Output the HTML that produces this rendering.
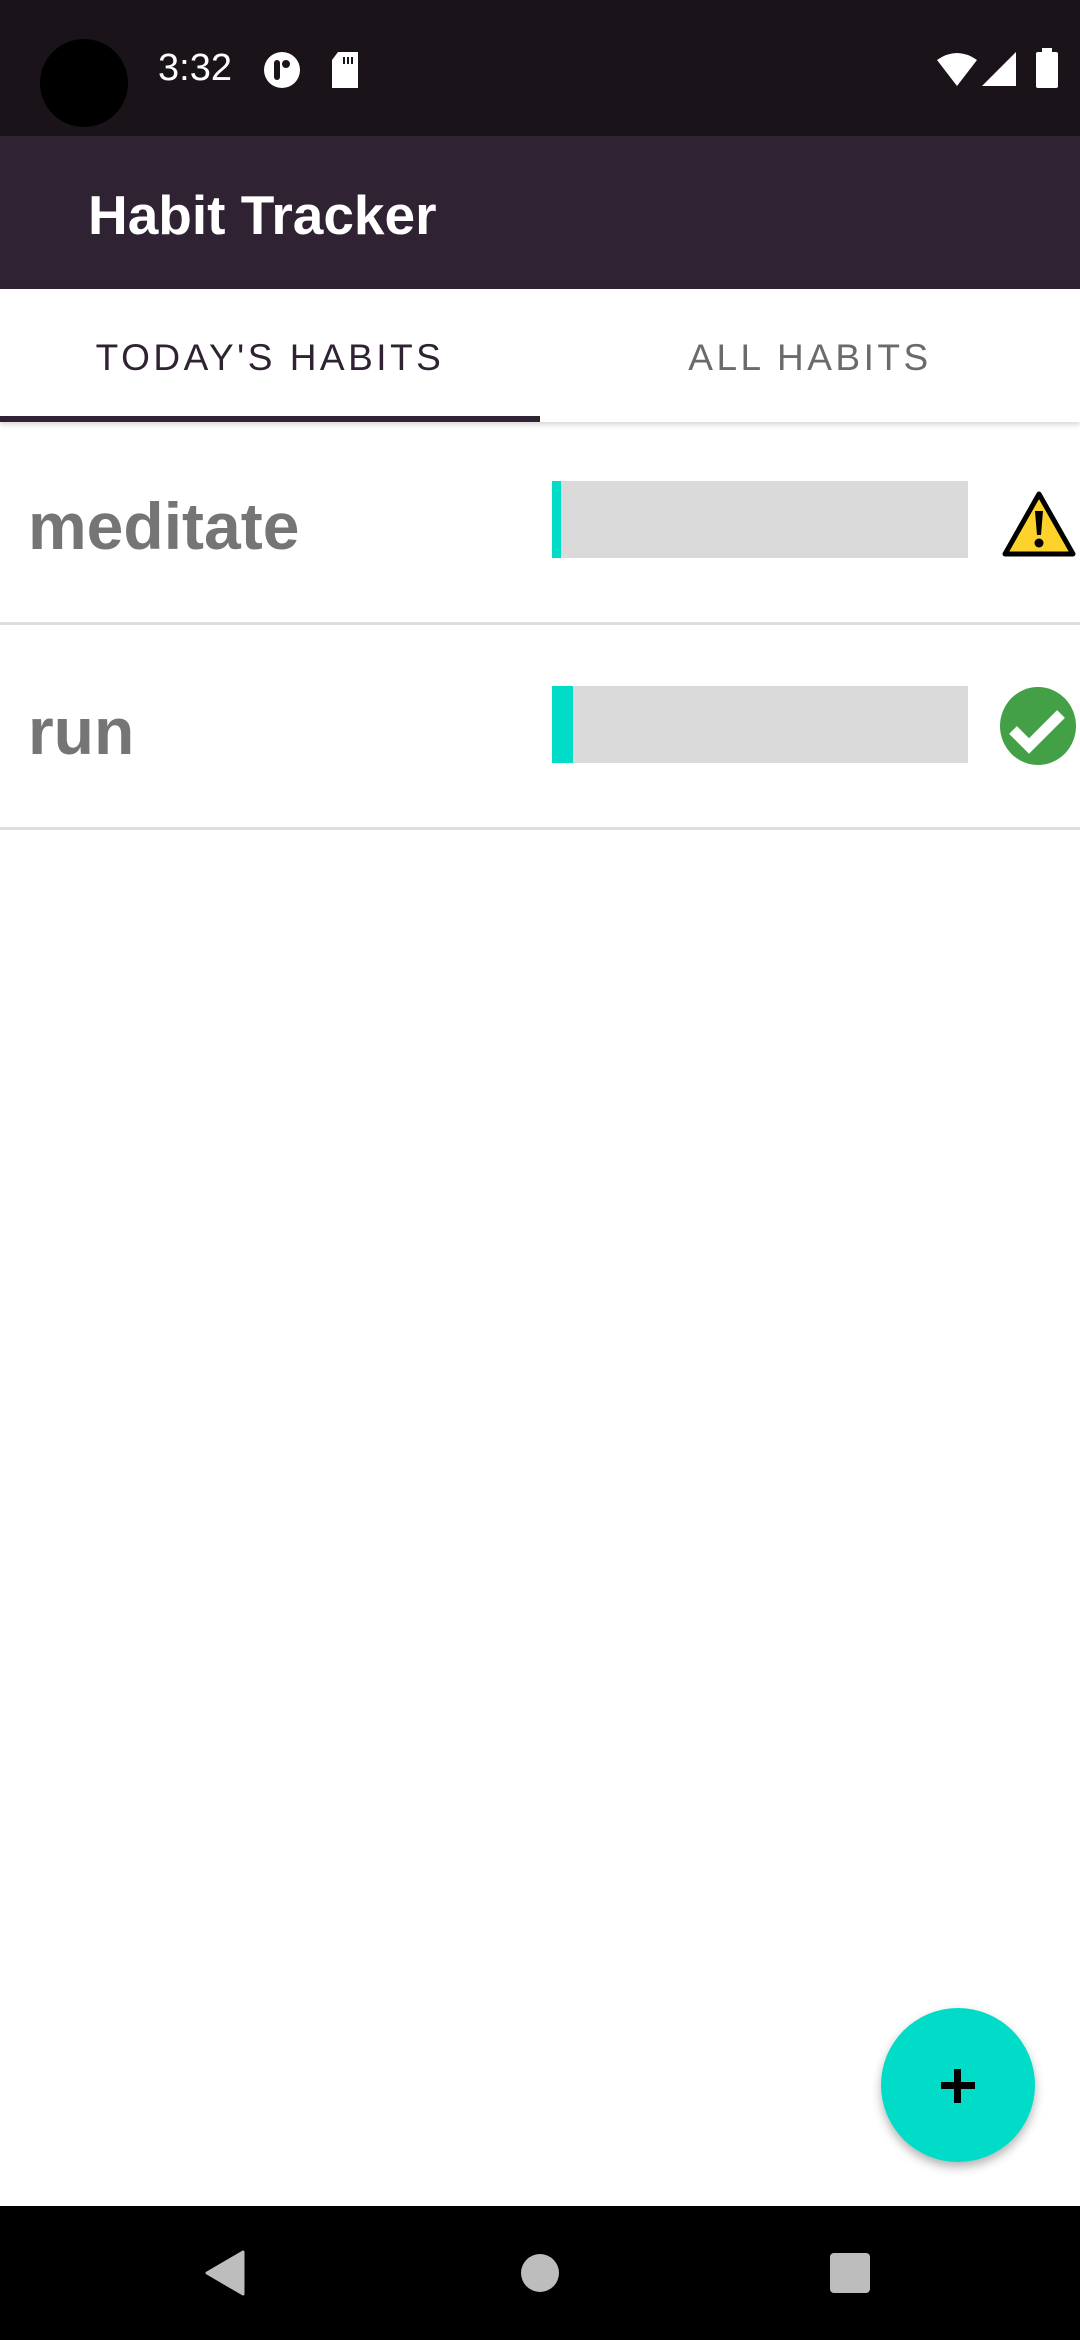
<!DOCTYPE html>
<html><head><meta charset="utf-8"><style>
*{margin:0;padding:0;box-sizing:border-box}
body{width:1080px;height:2340px;position:relative;background:#fff;font-family:"Liberation Sans",sans-serif;overflow:hidden}
.abs{position:absolute}
</style></head><body>
<div class="abs" style="left:0;top:0;width:1080px;height:136px;background:#1a1319"></div>
<div class="abs" style="left:40px;top:39px;width:88px;height:88px;border-radius:50%;background:#000"></div>
<div class="abs" style="left:158px;top:47px;color:#fff;font-size:38px;line-height:42px">3:32</div>
<svg class="abs" style="left:262px;top:50px" width="40" height="40" viewBox="0 0 40 40"><circle cx="20" cy="20" r="18" fill="#fff"/><rect x="12" y="10" width="6" height="20" rx="3" fill="#1a1319"/><circle cx="24" cy="14" r="4" fill="#1a1319"/></svg>
<svg class="abs" style="left:330px;top:52px" width="30" height="36" viewBox="0 0 30 36"><path d="M8 0H28V36H2V8Z" fill="#fff"/><rect x="13" y="5" width="2" height="7" fill="#1a1319"/><rect x="17" y="5" width="2" height="7" fill="#1a1319"/><rect x="21" y="5" width="2" height="7" fill="#1a1319"/></svg>
<svg class="abs" style="left:937px;top:52px" width="40" height="34" viewBox="0 0 40 34"><path d="M0 8Q20 -6 40 8L20 34Z" fill="#fff"/></svg>
<svg class="abs" style="left:982px;top:52px" width="34" height="34" viewBox="0 0 34 34"><path d="M34 0V34H0Z" fill="#fff"/></svg>
<svg class="abs" style="left:1036px;top:48px" width="22" height="40" viewBox="0 0 22 40"><rect x="6" y="0" width="10" height="5" fill="#fff"/><rect x="0" y="4" width="22" height="36" rx="2" fill="#fff"/></svg>

<div class="abs" style="left:0;top:136px;width:1080px;height:153px;background:#2f2232"></div>
<div class="abs" style="left:88px;top:184px;color:#fff;font-size:55px;font-weight:bold;line-height:62px">Habit Tracker</div>

<div class="abs" style="left:0;top:289px;width:1080px;height:133px;background:#fff;box-shadow:0 3px 5px rgba(0,0,0,0.15)"></div>
<div class="abs" style="left:0;top:335px;width:540px;text-align:center;color:#2f2232;font-size:37px;letter-spacing:3.5px;line-height:46px">TODAY'S HABITS</div>
<div class="abs" style="left:540px;top:335px;width:540px;text-align:center;color:#6b6b6b;font-size:37px;letter-spacing:3.5px;line-height:46px">ALL HABITS</div>
<div class="abs" style="left:0;top:416px;width:540px;height:6px;background:#2f2232"></div>

<div class="abs" style="left:28px;top:486px;color:#757575;font-size:66px;font-weight:bold;line-height:80px">meditate</div>
<div class="abs" style="left:552px;top:481px;width:416px;height:77px;background:#dadada"></div>
<div class="abs" style="left:552px;top:481px;width:9px;height:77px;background:#00dcc8"></div>
<svg class="abs" style="left:1002px;top:490px" width="74" height="68" viewBox="0 0 74 68"><path d="M37 4L71 64H3Z" fill="#fdd22b" stroke="#000" stroke-width="5" stroke-linejoin="round"/><path d="M33 21h8l-2 24h-4z" fill="#000"/><circle cx="37" cy="53" r="4.5" fill="#000"/></svg>
<div class="abs" style="left:0;top:622px;width:1080px;height:3px;background:#dedede"></div>

<div class="abs" style="left:28px;top:691px;color:#757575;font-size:66px;font-weight:bold;line-height:80px">run</div>
<div class="abs" style="left:552px;top:686px;width:416px;height:77px;background:#dadada"></div>
<div class="abs" style="left:552px;top:686px;width:21px;height:77px;background:#00dcc8"></div>
<svg class="abs" style="left:999px;top:686px" width="78" height="80" viewBox="0 0 78 80"><ellipse cx="39" cy="40" rx="38" ry="39" fill="#43a047"/><path d="M14 44L30 60L62 28" stroke="#fff" stroke-width="11" fill="none"/></svg>
<div class="abs" style="left:0;top:827px;width:1080px;height:3px;background:#dedede"></div>

<div class="abs" style="left:881px;top:2008px;width:154px;height:154px;border-radius:50%;background:#00dcc8;box-shadow:0 5px 10px rgba(0,0,0,0.3)"></div>
<div class="abs" style="left:941px;top:2082px;width:34px;height:7px;background:#000"></div>
<div class="abs" style="left:954px;top:2069px;width:7px;height:34px;background:#000"></div>

<div class="abs" style="left:0;top:2206px;width:1080px;height:134px;background:#000"></div>
<svg class="abs" style="left:205px;top:2250px" width="40" height="46" viewBox="0 0 40 46"><path d="M38 2V44L2 23Z" fill="#bdbdbd" stroke="#bdbdbd" stroke-width="3" stroke-linejoin="round"/></svg>
<div class="abs" style="left:521px;top:2254px;width:38px;height:38px;border-radius:50%;background:#bdbdbd"></div>
<div class="abs" style="left:830px;top:2253px;width:40px;height:40px;border-radius:4px;background:#bdbdbd"></div>
</body></html>
